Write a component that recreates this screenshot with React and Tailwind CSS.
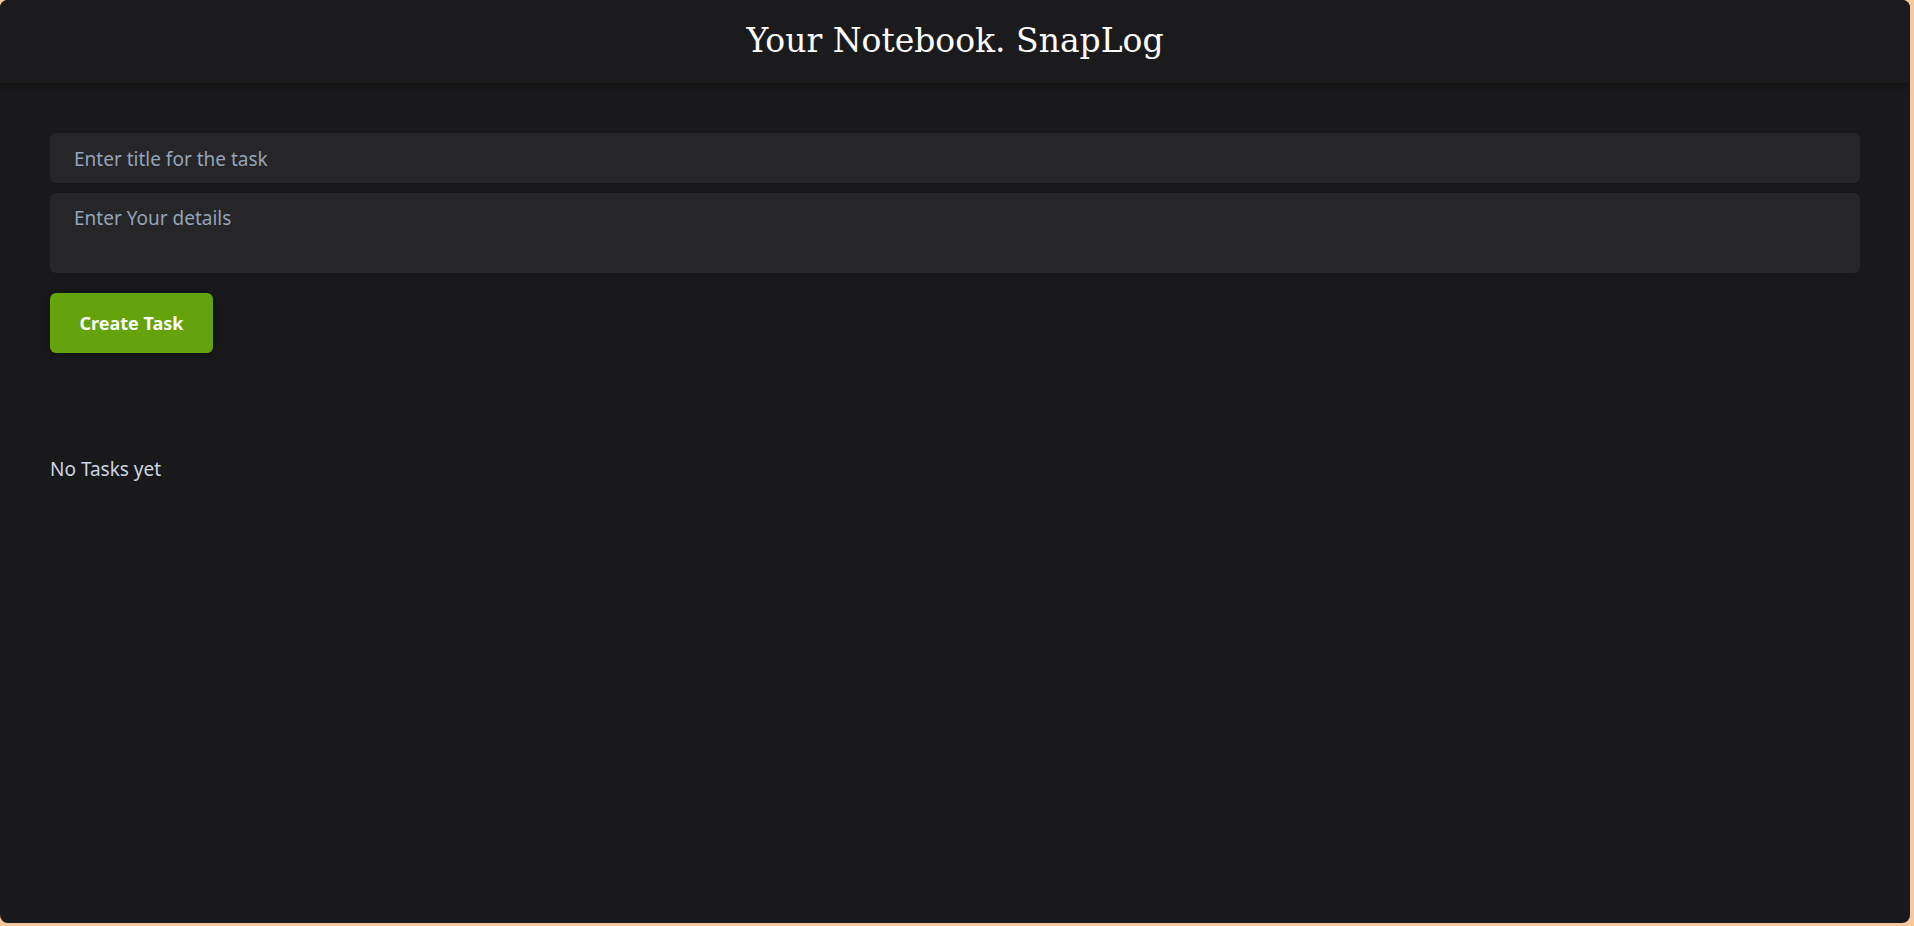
import React, { useState } from 'react';

export default function App() {
  const [title, setTitle] = useState('');
  const [details, setDetails] = useState('');
  const [tasks, setTasks] = useState([]);

  const addTask = () => {
    if (!title.trim()) return;
    setTasks([...tasks, { title, details }]);
    setTitle('');
    setDetails('');
  };

  return (
    <div className="min-h-screen bg-[#f5c99b] pr-[4px] pb-[3px] flex" style={{ fontFamily: '"Noto Sans", "Open Sans", sans-serif' }}>
      <div className="flex-1 rounded-lg bg-[#19191b] flex flex-col overflow-hidden min-h-[923px]">
        <header className="h-[83px] bg-[#1b1b1d] flex items-center justify-center shadow-[0_2px_6px_rgba(0,0,0,0.35)]">
          <h1 className="text-white text-[33px] leading-none -mt-[2px]" style={{ fontFamily: '"DejaVu Serif", "Liberation Serif", serif' }}>
            Your Notebook. SnapLog
          </h1>
        </header>

        <main className="px-[50px] pt-[50px]">
          <div className="flex flex-col gap-[10px]">
            <input
              value={title}
              onChange={(e) => setTitle(e.target.value)}
              placeholder="Enter title for the task"
              className="h-[50px] rounded-md bg-[#262628] px-6 pt-[2px] text-[19px] text-white placeholder:text-[#94a3b8] outline-none"
            />
            <textarea
              value={details}
              onChange={(e) => setDetails(e.target.value)}
              placeholder="Enter Your details"
              className="h-[80px] rounded-md bg-[#262628] px-6 pt-[11px] text-[19px] leading-[28px] text-white placeholder:text-[#94a3b8] outline-none resize-none"
            />
          </div>

          <button
            onClick={addTask}
            className="mt-[20px] w-[163px] h-[60px] rounded-md bg-[#65a30d] text-white font-bold text-[18px] shadow-[0_0_12px_rgba(0,0,0,0.35)]"
          >
            Create Task
          </button>

          <div className="mt-[102px] text-[#cbd5e1] text-[19px]">
            {tasks.length === 0 ? (
              <p>No Tasks yet</p>
            ) : (
              <ul className="space-y-3">
                {tasks.map((t, i) => (
                  <li key={i}>
                    <h4 className="font-bold">{t.title}</h4>
                    <p className="text-[#94a3b8]">{t.details}</p>
                  </li>
                ))}
              </ul>
            )}
          </div>
        </main>
      </div>
    </div>
  );
}
